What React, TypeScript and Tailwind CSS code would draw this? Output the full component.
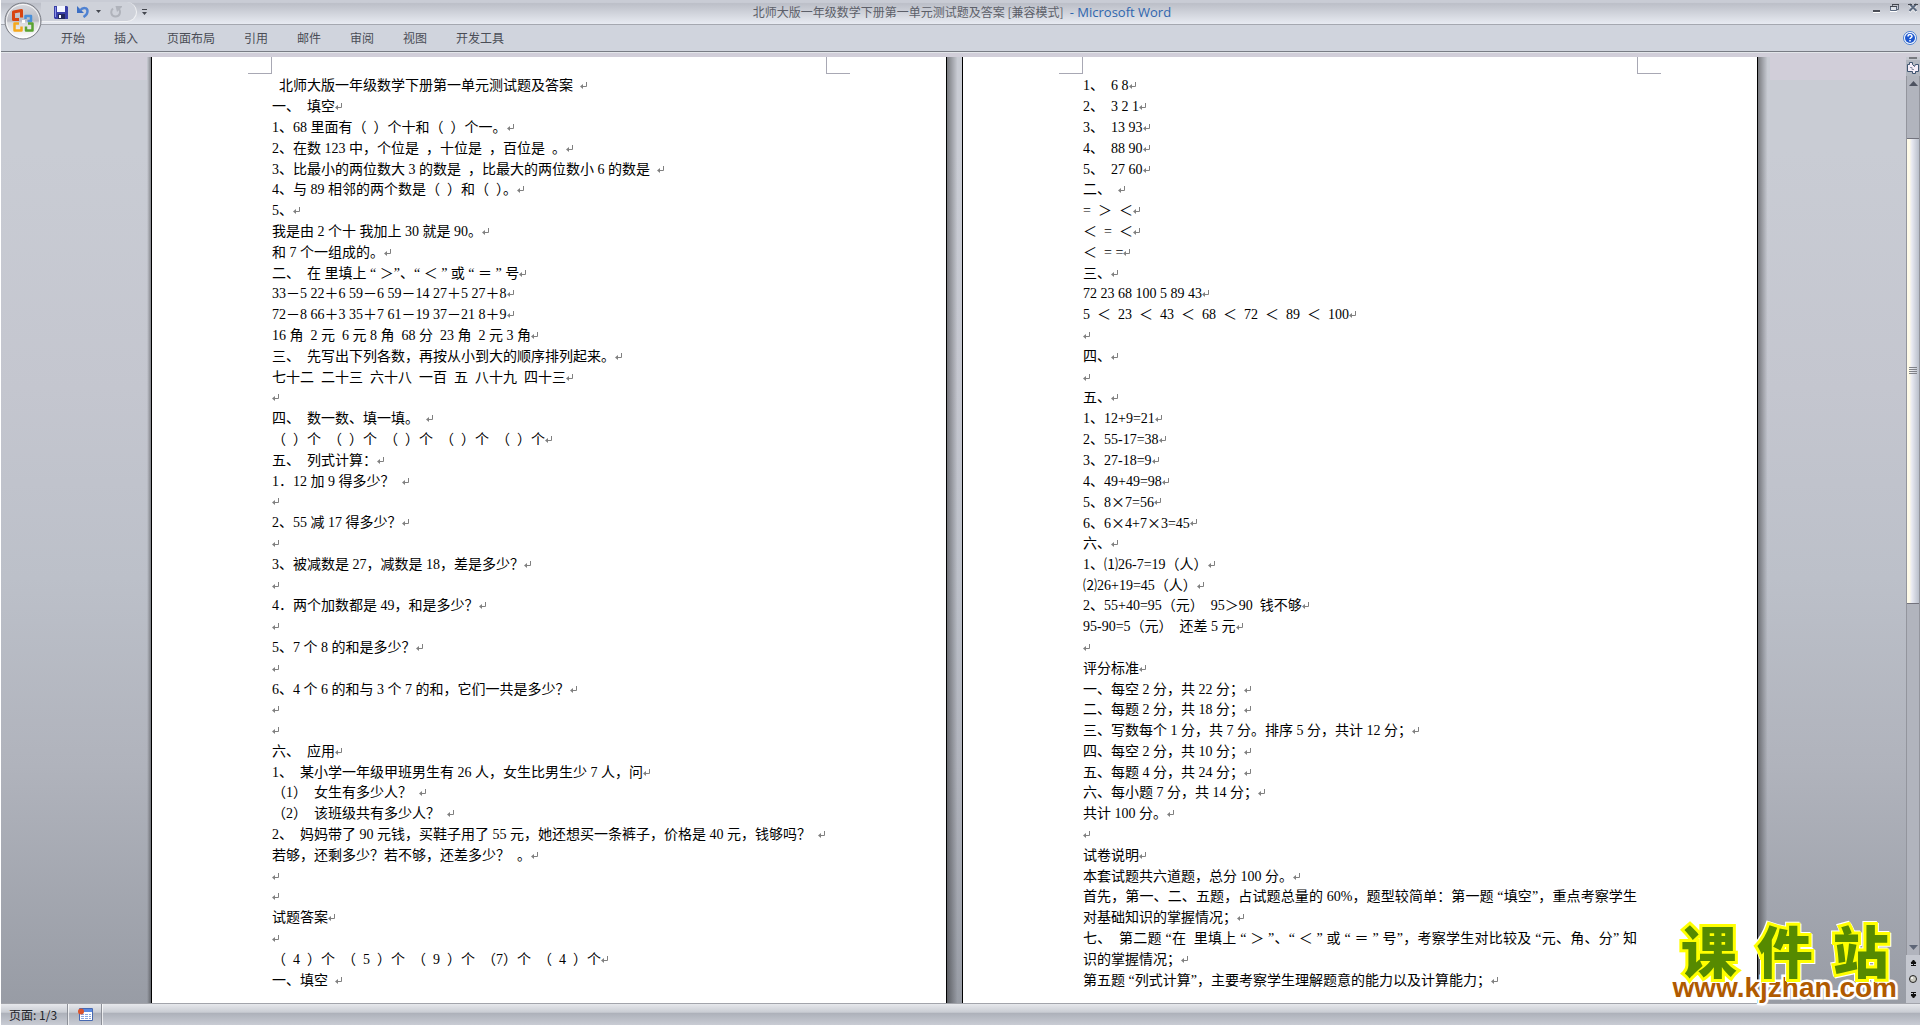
import React from 'react'

const TABS = ['开始', '插入', '页面布局', '引用', '邮件', '审阅', '视图', '开发工具']

const DOC_TITLE = '北师大版一年级数学下册第一单元测试题及答案'

const QUESTIONS = [
  '  北师大版一年级数学下册第一单元测试题及答案  ',
  '一、  填空',
  '1、68 里面有（  ）个十和（  ）个一。',
  '2、在数 123 中，个位是  ，十位是  ，百位是  。',
  '3、比最小的两位数大 3 的数是  ，比最大的两位数小 6 的数是  ',
  '4、与 89 相邻的两个数是（  ）和（  ）。',
  '5、',
  '我是由 2 个十 我加上 30 就是 90。',
  '和 7 个一组成的。',
  '二、  在 里填上 “ ＞”、“ ＜ ” 或 “ ＝ ” 号',
  '33－5 22＋6 59－6 59－14 27＋5 27＋8',
  '72－8 66＋3 35＋7 61－19 37－21 8＋9',
  '16 角  2 元  6 元 8 角  68 分  23 角  2 元 3 角',
  '三、  先写出下列各数，再按从小到大的顺序排列起来。',
  '七十二  二十三  六十八  一百  五  八十九  四十三',
  '',
  '四、  数一数、填一填。  ',
  '（  ）个  （  ）个  （  ）个  （  ）个  （  ）个',
  '五、  列式计算：',
  '1．12 加 9 得多少？  ',
  '',
  '2、55 减 17 得多少？',
  '',
  '3、被减数是 27，减数是 18，差是多少？',
  '',
  '4．两个加数都是 49，和是多少？',
  '',
  '5、7 个 8 的和是多少？',
  '',
  '6、4 个 6 的和与 3 个 7 的和，它们一共是多少？',
  '',
  '',
  '六、  应用',
  '1、  某小学一年级甲班男生有 26 人，女生比男生少 7 人，问',
  '（1）  女生有多少人？  ',
  '（2）  该班级共有多少人？  ',
  '2、  妈妈带了 90 元钱，买鞋子用了 55 元，她还想买一条裤子，价格是 40 元，钱够吗？  ',
  '若够，还剩多少？若不够，还差多少？  。',
  '',
  '',
  '试题答案',
  '',
  '（  4  ）个  （  5  ）个  （  9  ）个  （7）个  （  4  ）个',
  '一、填空  ',
]

const ANSWERS = [
  '1、  6 8',
  '2、  3 2 1',
  '3、  13 93',
  '4、  88 90',
  '5、  27 60',
  '二、  ',
  '=  ＞  ＜',
  '＜  =  ＜',
  '＜  = =',
  '三、',
  '72 23 68 100 5 89 43',
  '5  ＜  23  ＜  43  ＜  68  ＜  72  ＜  89  ＜  100',
  '',
  '四、',
  '',
  '五、',
  '1、12+9=21',
  '2、55-17=38',
  '3、27-18=9',
  '4、49+49=98',
  '5、8×7=56',
  '6、6×4+7×3=45',
  '六、',
  '1、⑴26-7=19（人）',
  '⑵26+19=45（人）',
  '2、55+40=95（元）  95＞90  钱不够',
  '95-90=5（元）  还差 5 元',
  '',
  '评分标准',
  '一、每空 2 分，共 22 分；',
  '二、每题 2 分，共 18 分；',
  '三、写数每个 1 分，共 7 分。排序 5 分，共计 12 分；',
  '四、每空 2 分，共 10 分；',
  '五、每题 4 分，共 24 分；',
  '六、每小题 7 分，共 14 分；',
  '共计 100 分。',
  '',
  '试卷说明',
  '本套试题共六道题，总分 100 分。',
  '首先，第一、二、五题，占试题总量的 60%，题型较简单：第一题 “填空”，重点考察学生\n',
  '对基础知识的掌握情况；',
  '七、  第二题 “在  里填上 “ ＞ ”、“ ＜ ” 或 “ ＝ ” 号”，考察学生对比较及 “元、角、分” 知\n',
  '识的掌握情况；',
  '第五题 “列式计算”，主要考察学生理解题意的能力以及计算能力；',
]

const ReturnMark = () => (
  <svg aria-hidden="true" className="h-2 w-[7px] shrink-0" viewBox="0 0 7 8">
    <path d="M6.5 0v4.5H2" fill="none" stroke="#808080" />
    <path d="M0 4.5 3 2v5z" fill="#808080" />
  </svg>
)

const Line: React.FC<{ text: string }> = ({ text }) => {
  // A trailing newline means the paragraph wraps there: justified, no return mark
  if (text.endsWith('\n')) {
    return (
      <p className="flex min-h-4 flex-1 items-center leading-4">
        <span className="w-full text-justify whitespace-pre-wrap [text-align-last:justify]">
          {text.trimEnd()}
        </span>
      </p>
    )
  }

  return (
    <p className="flex min-h-4 flex-1 items-center whitespace-pre leading-4">
      <span>
        {text.split(/(×)/).map((part, i) =>
          part === '×' ? (
            <span className="font-['Noto_Sans_CJK_SC',sans-serif]" key={i}>
              ×
            </span>
          ) : (
            part
          ),
        )}
      </span>
      <ReturnMark />
    </p>
  )
}

const Page: React.FC<{ lines: string[] }> = ({ lines }) => (
  <article className="flex w-[796px] shrink-0 flex-col border-x border-black bg-white pb-3">
    {/* margin corners */}
    <div className="flex h-[19px] shrink-0 justify-between px-24">
      <div className="h-[17px] w-6 border-r border-b border-[#a8a8b4]" />
      <div className="h-[17px] w-6 border-b border-l border-[#a8a8b4]" />
    </div>
    <div className="flex flex-1 flex-col px-[120px] font-['Liberation_Serif','Noto_Sans_CJK_SC',serif] text-sm text-black">
      {lines.map((text, i) => (
        <Line key={i} text={text} />
      ))}
    </div>
  </article>
)

const OfficeButton = () => (
  <button aria-label="Office 按钮" className="absolute top-0.5 left-[3px] z-10 h-[38px] w-[38px]" type="button">
    <svg className="h-full w-full" viewBox="0 0 38 38">
      <defs>
        <linearGradient id="orb" x1="0" x2="0" y1="0" y2="1">
          <stop offset="0" stopColor="#d8d9de" />
          <stop offset="0.5" stopColor="#b9bac2" />
          <stop offset="0.55" stopColor="#d9dade" />
          <stop offset="1" stopColor="#ffffff" />
        </linearGradient>
      </defs>
      <circle cx="19" cy="19" fill="url(#orb)" r="18" stroke="#777a82" />
      <circle cx="19" cy="19" fill="none" r="16.5" stroke="#ffffff" strokeOpacity="0.8" />
      <g fill="none" strokeLinejoin="round">
        <path d="M15 17.500h-5.500v-7.500l8-1.500v7" stroke="#d8430f" strokeWidth="3" />
        <path d="M21.500 17v-3h5.500v5h-3.500" stroke="#4a8fd8" strokeWidth="2.5" />
        <path d="M15 21.500h-4.500v7h7v-4" stroke="#f5a81c" strokeWidth="2.5" />
        <path d="M24 21.500h4.500v7h-6.500v-4" stroke="#5aa332" strokeWidth="2.5" />
      </g>
      <path d="M18 18h3v3h-3z" fill="#fff" />
    </svg>
  </button>
)

const QuickAccess = () => (
  <div className="flex items-center pl-10">
    <div className="flex h-5 w-24 items-center rounded-r-full border-r border-b border-white/70 bg-[#cfd2da] pl-[13px]">
      <button aria-label="保存" type="button">
        <svg className="h-[14px] w-[14px]" viewBox="0 0 14 14">
          <path d="M0 1h13l1 1v12H1l-1-1z" fill="#3a3fa8" />
          <path d="M3 1h8v6H3z" fill="#f4f6ff" />
          <path d="M4 9h7v5H4z" fill="#23285e" />
          <path d="M5 10h2v3H5z" fill="#fff" />
          <path d="M1 2h1v10H1z" fill="#8b93ea" />
        </svg>
      </button>
      <button aria-label="撤消" className="ml-[9px]" type="button">
        <svg className="h-3 w-3" viewBox="0 0 12 12">
          <path d="M0 0v7h7z" fill="#3d6fc4" />
          <path d="M3 4.500C6 1 10.500 1.500 10.500 5c0 2.500-1.500 4.500-4 6" fill="none" stroke="#4f82d2" strokeWidth="2.5" />
        </svg>
      </button>
      <button aria-label="撤消列表" className="ml-[7px]" type="button">
        <svg className="h-[3px] w-[5px]" viewBox="0 0 5 3">
          <path d="M0 0h5L2.500 3z" fill="#44474f" />
        </svg>
      </button>
      <button aria-label="恢复" className="ml-[9px]" type="button">
        <svg className="h-3 w-3" viewBox="0 0 12 12">
          <path d="M3 2.500C0 5 1 10.500 5.500 10.500S11 6 9 3" fill="none" stroke="#b0b3bb" strokeWidth="2" />
          <path d="M5.500 0H12v1L7 6z" fill="#b0b3bb" />
        </svg>
      </button>
    </div>
    <button aria-label="自定义快速访问工具栏" className="ml-[5px]" type="button">
      <svg className="h-[6px] w-[5px]" viewBox="0 0 5 6">
        <path d="M0 0h5v1H0zM0 3h5L2.500 6z" fill="#44474f" />
      </svg>
    </button>
  </div>
)

const WindowButtons = () => (
  <div className="flex items-start gap-[9px] pr-[2px] pt-[3px]">
    <button aria-label="最小化" type="button">
      <svg className="h-[11px] w-[9px]" viewBox="0 0 9 11">
        <path d="M1 7h7v2H1z" fill="#4b4e57" />
        <path d="M1 9h7v1H1z" fill="#fff" />
      </svg>
    </button>
    <button aria-label="还原" type="button">
      <svg className="h-[11px] w-[9px]" viewBox="0 0 9 11">
        <path d="M2.500 3V1.500h6v5H7" fill="none" stroke="#5c6473" />
        <path d="M.5 3.500h6v4h-6z" fill="#dfe3ea" stroke="#5c6a80" />
        <path d="M2 1h7v1H2zM0 3h7v1H0z" fill="#44474f" />
        <path d="M0 8h7v1H0z" fill="#fff" />
      </svg>
    </button>
    <button aria-label="关闭" type="button">
      <svg className="h-[11px] w-[10px]" viewBox="0 0 10 11">
        <path d="m1.500 2 7 7m0-7-7 7" stroke="#fff" strokeWidth="2" />
        <path d="m1.500 1 7 7m0-7-7 7" stroke="#5c6a80" strokeWidth="2" />
        <path d="M0 1h4v1H0zM6 1h4v1H6z" fill="#44474f" />
      </svg>
    </button>
  </div>
)

const TitleBar = () => (
  <header className="grid h-6 shrink-0 grid-cols-[1fr_auto_1fr] bg-linear-to-b from-[#c9ccd5] from-10% via-[#bcbfc8] via-15% to-[#e8ebf2]">
    <QuickAccess />
    <h1 className="whitespace-pre pl-[3px] text-xs leading-6 text-[#5c5f69]">
      {DOC_TITLE} [兼容模式] <span className="font-['Open_Sans','Noto_Sans',sans-serif] text-[13px] text-[#2f66ae]"> - Microsoft Word</span>
    </h1>
    <div className="flex justify-end">
      <WindowButtons />
    </div>
  </header>
)

const Ribbon = () => (
  <nav className="flex h-[28px] shrink-0 items-center gap-[29px] border-t border-b border-t-[#a5a8b0] border-b-[#787c84] bg-[#d0d4dd] pr-[3px] pl-[60px] text-xs text-[#4a4d56]">
    {TABS.map((tab) => (
      <button key={tab} type="button">
        {tab}
      </button>
    ))}
    <button aria-label="帮助" className="ml-auto" type="button">
      <svg className="h-[14px] w-[14px]" viewBox="0 0 14 14">
        <circle cx="7" cy="7" fill="#fff" r="6.5" stroke="#4a7ed0" />
        <circle cx="7" cy="7" fill="#1d57cf" r="5" />
        <path d="M5 5.500C5 3 9 3 9 5.300c0 1.300-2 1.400-2 2.700M7 9v1.500" fill="none" stroke="#fff" strokeWidth="1.5" />
      </svg>
    </button>
  </nav>
)

const ScrollBar = () => (
  <aside className="flex w-[14px] shrink-0 flex-col bg-[#c5c8d0]">
    <button aria-label="拆分窗口" className="flex h-[3px] items-start justify-center" type="button">
      <span className="h-0.5 w-2 bg-[#77797f]" />
    </button>
    <button aria-label="标尺" className="flex h-4 items-center justify-center bg-[#b3b7c0]" type="button">
      <svg className="h-3 w-3" viewBox="0 0 12 12">
        <path d="M.5 2.500h2v-2h3v2l2 2 1-2h3v7h-3v2h-3v-2h-5z" fill="#f6eef8" stroke="#3f5470" />
        <path d="M3 5.500h2v2h2" fill="none" stroke="#8b93a5" />
      </svg>
    </button>
    <div className="flex flex-1 flex-col border-x border-[#93959d] bg-[#b1b4bd]">
      <button aria-label="向上滚动" className="flex h-[62px] items-start justify-center pt-[5px]" type="button">
        <svg className="h-[5px] w-[9px]" viewBox="0 0 9 5">
          <path d="M4.500 0 9 5H0z" fill="#4d5260" />
        </svg>
      </button>
      <div className="flex h-[53%] flex-col items-center justify-center gap-px border-y border-[#73737d] bg-linear-to-r from-[#fffbe8] from-20% via-[#e9eaf2] via-40% to-[#b9bfcb]">
        <span className="h-px w-2 bg-[#808289]" />
        <span className="h-px w-2 bg-[#808289]" />
        <span className="h-px w-2 bg-[#808289]" />
        <span className="h-px w-2 bg-[#808289]" />
      </div>
      <button aria-label="向下滚动" className="mt-auto mb-[5px]" type="button">
        <svg className="mx-auto h-[5px] w-[9px]" viewBox="0 0 9 5">
          <path d="M0 0h9L4.500 5z" fill="#5e6677" />
        </svg>
      </button>
    </div>
    <div className="flex h-12 flex-col items-center justify-around">
      <button aria-label="前一页" type="button">
        <svg className="h-[6px] w-[7px]" viewBox="0 0 7 6">
          <path d="M3.500 0 6 3H1zM1 3.500h5M3.500 2v3M1 5.500h5" fill="#111" stroke="#111" />
        </svg>
      </button>
      <button aria-label="选择浏览对象" type="button">
        <svg className="h-2 w-2" viewBox="0 0 8 8">
          <circle cx="4" cy="4" fill="#c9c9c0" r="3.5" stroke="#222" />
          <circle cx="3" cy="3" fill="#fff" r="1" />
        </svg>
      </button>
      <button aria-label="下一页" type="button">
        <svg className="h-[6px] w-[7px]" viewBox="0 0 7 6">
          <path d="M3.500 6 1 3h5zM1 2.500h5M3.500 1v3M1 .5h5" fill="#111" stroke="#111" />
        </svg>
      </button>
    </div>
  </aside>
)

const StatusBar = () => (
  <footer className="flex h-[22px] shrink-0 border-t border-[#a2a4ab] bg-[linear-gradient(to_bottom,#e6e8ec,#c9ccd3_40%,#acb0b9_42%,#c9ccd4)] text-xs text-[#22242a]">
    <div className="flex w-[67px] items-center border-r border-[#8d9098] pl-2 whitespace-pre">页面: 1/3</div>
    <div className="flex w-[34px] items-center justify-center border-r border-l border-r-[#8d9098] border-l-white/70">
      <button aria-label="宏录制" type="button">
        <svg className="h-[13px] w-[15px]" viewBox="0 0 15 13">
          <path d="M1.500.5h13v12h-13z" fill="#fff" stroke="#4668b0" />
          <path d="M2 1h12v3H2z" fill="#5b8ae0" />
          <path d="M3 6.500h10M3 8.500h10M3 10.500h10" stroke="#8aa8de" strokeDasharray="3 1" />
          <circle cx="3" cy="3.5" fill="#d9532c" r="3" />
        </svg>
      </button>
    </div>
    <div className="flex-1 border-l border-white/70" />
  </footer>
)

const Watermark = () => (
  <a className="absolute right-[23px] bottom-px flex flex-col items-center" href="#kjzhan">
    <span className="flex gap-5 font-['Noto_Sans_CJK_SC',sans-serif] text-[56px] leading-[50px] font-black text-[#568a00] [-webkit-text-stroke:6px_#ffff00] [filter:drop-shadow(1px_1px_0_#fff)_drop-shadow(-1px_-1px_0_#fff)] [paint-order:stroke_fill]">
      <span>课</span>
      <span>件</span>
      <span>站</span>
    </span>
    <span className="font-['Liberation_Sans',sans-serif] text-[28px] leading-7 font-bold text-[#b05a00] [-webkit-text-stroke:5px_#ffffff] [paint-order:stroke_fill]">
      www.kjzhan.com
    </span>
  </a>
)

export default function App() {
  return (
    <div className="flex h-screen flex-col overflow-hidden border-l border-white font-['Noto_Sans_CJK_SC',sans-serif]">
      <div className="relative shrink-0">
        <OfficeButton />
        <TitleBar />
        <Ribbon />
      </div>
      <div className="h-[5px] shrink-0 border-t border-[#e3e6ea] bg-[#d1ced9]" />
      <main className="relative flex min-h-0 flex-1 bg-[linear-gradient(to_bottom,#c9ccd4_10%,#c4c6cf_35%,#bcc0c9_55%,#b0b3bc_75%,#989ca5)]">
        <div className="flex min-w-0 flex-1 pl-0.5">
          <div className="flex flex-1 justify-end">
            <div className="-ml-0.5 h-[23px] flex-1 bg-[#d1ced9]" />
            <div className="w-1 bg-linear-to-r from-transparent to-black/35" />
          </div>
          <Page lines={QUESTIONS} />
          <div className="w-[15px] bg-linear-to-r from-black/40 to-transparent to-70%" />
          <Page lines={ANSWERS} />
          <div className="flex flex-1">
            <div className="w-3 bg-linear-to-r from-black/40 to-transparent to-80%" />
            <div className="h-[23px] flex-1 bg-[#d1ced9]" />
          </div>
        </div>
        <ScrollBar />
        <Watermark />
      </main>
      <StatusBar />
    </div>
  )
}
